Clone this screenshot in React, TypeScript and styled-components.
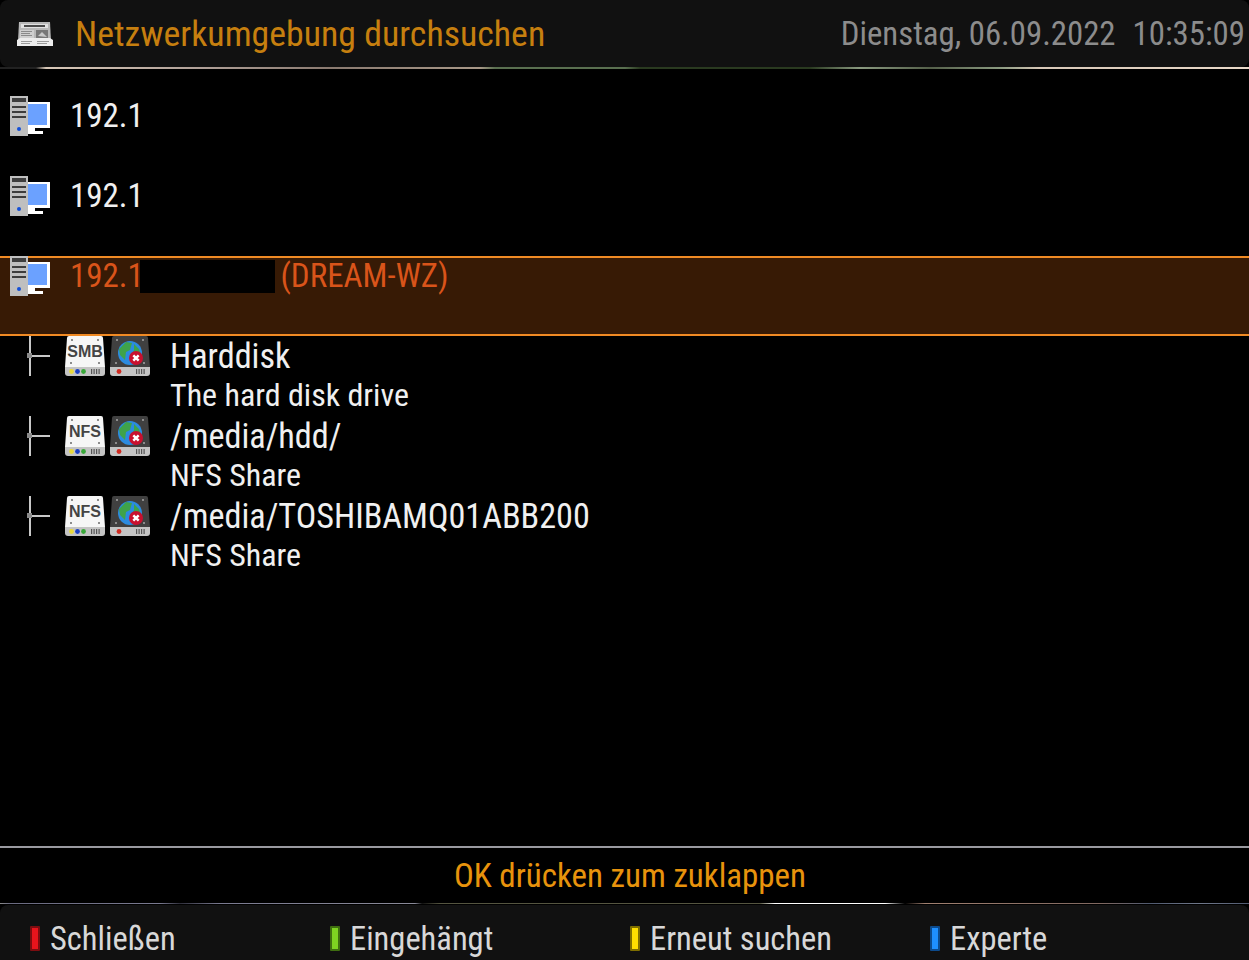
import React from 'react';
import styled, {createGlobalStyle} from 'styled-components';

const GlobalStyle = createGlobalStyle`
  html, body {
    margin: 0;
    padding: 0;
    height: 100%;
    background: #000;
    overflow: hidden;
  }
  #root {
    height: 960px;
  }
`

const NewspaperIcon = () => (
    <svg width="38" height="26" viewBox="0 0 38 26">
        <path d="M3 1h31l1 19H2z" fill="#b8b8b8"/>
        <path d="M5 3h27v4H5z" fill="#e2e2e2"/>
        <path d="M8 4h21v2H8z" fill="#4a4a4a"/>
        <path d="M4 9h14v8H4z" fill="#cfcfcf"/>
        <path d="M5 10h11v1H5zM5 12h9v1H5zM5 14h11v1H5z" fill="#8a8a8a"/>
        <path d="M20 9h12v8H20z" fill="#777"/>
        <path d="M22 15l4-4 5 5z" fill="#c8c8c8"/>
        <path d="M1 19l3-2h30l3 2v6H1z" fill="#ededed"/>
        <path d="M5 20h11v1H5zM5 22h9v1H5zM21 20h12v1H21zM21 22h10v1H21z" fill="#9a9a9a"/>
    </svg>
);

const ComputerIcon = () => (
    <svg width="40" height="40" viewBox="0 0 40 40">
        <path d="M18 6h22v26H18z" fill="#fff"/>
        <path d="M18 8h19v21H18z" fill="#6ba1ff"/>
        <path d="M18 32h7v3h8v3H18z" fill="#fff"/>
        <path d="M0 0h18v40H0z" fill="#bfbfbf"/>
        <path d="M2 2h14v4H2zM2 10h14v2H2zM2 15h14v2H2zM2 20h14v2H2z" fill="#3d3d3d"/>
        <circle cx="9" cy="33" r="2" fill="#1450d8"/>
    </svg>
);

const TreeIcon = () => (
    <svg width="40" height="40" viewBox="0 0 40 40">
        <path d="M9 0h2v40H9z" fill="#c8c8c8"/>
        <path d="M7 17h5v5H7z" fill="#8a8a8a"/>
        <path d="M12 19h18v2H12z" fill="#c8c8c8"/>
    </svg>
);

const ScrewDots = () => (
    <path d="M6 3h2v2H6zM32 3h2v2h-2zM5 26h2v2H5zM33 26h2v2h-2z" fill="#8c8c8c"/>
);

const ShareIcon = () => (
    <svg width="40" height="40" viewBox="0 0 40 40">
        <path d="M4 0h32a2 2 0 0 1 2 2l2 29H0L2 2a2 2 0 0 1 2-2z" fill="#f6f6f6"/>
        <ScrewDots/>
        <path d="M0 31h40v6a3 3 0 0 1-3 3H3a3 3 0 0 1-3-3z" fill="#c4c4c4"/>
        <circle cx="6.500" cy="35.500" r="2.400" fill="#e8d93a"/>
        <circle cx="12.500" cy="35.500" r="2.400" fill="#1a3fc4"/>
        <circle cx="18.500" cy="35.500" r="2.400" fill="#38a838"/>
        <path d="M26 33h1.200v5H26zM28.500 33h1.200v5h-1.200zM31 33h1.200v5H31zM33.500 33h1.200v5h-1.200z" fill="#555"/>
    </svg>
);

const NetworkDriveIcon = () => (
    <svg width="40" height="40" viewBox="0 0 40 40">
        <path d="M4 0h32a2 2 0 0 1 2 2l2 29H0L2 2a2 2 0 0 1 2-2z" fill="#404040"/>
        <ScrewDots/>
        <path d="M0 31h40v6a3 3 0 0 1-3 3H3a3 3 0 0 1-3-3z" fill="#c4c4c4"/>
        <circle cx="9" cy="35.500" r="2.400" fill="#d02a20"/>
        <path d="M26 33h1.200v5H26zM28.500 33h1.200v5h-1.200zM31 33h1.200v5H31zM33.500 33h1.200v5h-1.200z" fill="#555"/>
        <circle cx="20" cy="17" r="12" fill="#2b8be0"/>
        <path d="M9 13l7-7 6 1-2 7-4 2-1 8-5-5zM24 8l5 5 2 6-5 6-4-6 2-5z" fill="#3fa34a"/>
        <circle cx="26" cy="22" r="7" fill="#c8102e"/>
        <path d="M23.300 19.300l5.400 5.400M28.700 19.300l-5.400 5.400" stroke="#fff" strokeWidth="2.400"/>
    </svg>
);

const hosts = ['192.1', '192.1'];

const shares = [
    {tag: 'SMB', title: 'Harddisk', subtitle: 'The hard disk drive'},
    {tag: 'NFS', title: '/media/hdd/', subtitle: 'NFS Share'},
    {tag: 'NFS', title: '/media/TOSHIBAMQ01ABB200', subtitle: 'NFS Share'},
];

const buttons = [
    {label: 'Schließen', color: '#e8141c', edge: '#7c0d10'},
    {label: 'Eingehängt', color: '#7ed321', edge: '#3f6e10'},
    {label: 'Erneut suchen', color: '#ffdf00', edge: '#7e6e00'},
    {label: 'Experte', color: '#1e8fff', edge: '#0c4a8c'},
];

export default function App() {
    return (
        <Screen>
            <GlobalStyle/>
            <Header>
                <HeaderLeft>
                    <NewspaperIcon/>
                    <Title>Netzwerkumgebung durchsuchen</Title>
                </HeaderLeft>
                <Clock>
                    <span>Dienstag, 06.09.2022</span>
                    <span>10:35:09</span>
                </Clock>
            </Header>
            <TopRule/>
            <List>
                {hosts.map((host, index) => (
                    <HostRow key={index}>
                        <ComputerIcon/>
                        <HostText>{host}</HostText>
                    </HostRow>
                ))}
                <HostRow $selected>
                    <ComputerIcon/>
                    <HostText>
                        192.1<Redacted/> (DREAM-WZ)
                    </HostText>
                </HostRow>
                {shares.map((share, index) => (
                    <ShareRow key={index}>
                        <TreeIcon/>
                        <ShareIcon/>
                        <TagText>{share.tag}</TagText>
                        <NetworkDriveIcon/>
                        <ShareText>
                            <ShareTitle>{share.title}</ShareTitle>
                            <ShareSubtitle>{share.subtitle}</ShareSubtitle>
                        </ShareText>
                    </ShareRow>
                ))}
            </List>
            <Hint>OK drücken zum zuklappen</Hint>
            <BottomRule/>
            <Footer>
                {buttons.map((button) => (
                    <FooterButton key={button.label}>
                        <ColorKey $color={button.color} $edge={button.edge}/>
                        <FooterLabel>{button.label}</FooterLabel>
                    </FooterButton>
                ))}
            </Footer>
        </Screen>
    );
}

const Screen = styled.div`
  width: 1249px;
  height: 960px;
  display: flex;
  flex-direction: column;
  background: #000;
  font-family: Roboto, "Liberation Sans", sans-serif;
  font-stretch: condensed;
  overflow: hidden;
`

const Header = styled.header`
  height: 67px;
  flex-shrink: 0;
  display: flex;
  align-items: center;
  justify-content: space-between;
  padding: 0 4px 0 16px;
  box-sizing: border-box;
  background: #111;
  border-radius: 8px;
`

const TopRule = styled.div`
  height: 2px;
  flex-shrink: 0;
  background: linear-gradient(90deg,
    #222 0, #222 36px, #d8c8b8 46px, #b0a098 200px, #8a7a70 330px, #a89888 480px,
    #5a7050 495px, #5a7050 625px, #2a3a20 640px, #2a3a20 810px, #8a9a80 860px,
    #55604a 930px, #8a9a80 1000px, #d8c8b8 1040px, #e8d8c8 1249px);
`

const HeaderLeft = styled.div`
  display: flex;
  align-items: center;
  gap: 21px;
`

const Title = styled.h1`
  margin: 0;
  font-size: 35.800px;
  font-weight: 400;
  color: #c67f0f;
`

const Clock = styled.div`
  display: flex;
  gap: 17px;
  font-size: 32.800px;
  color: #8c8c8c;
`

const List = styled.main`
  flex: 1;
  margin-top: 27px;
  display: flex;
  flex-direction: column;
`

const HostRow = styled.div<{$selected?: boolean}>`
  height: 80px;
  box-sizing: border-box;
  display: flex;
  align-items: flex-start;
  gap: 20px;
  padding-left: 10px;
  color: ${(p) => (p.$selected ? '#d9541a' : '#f0f0f0')};
  background: ${(p) => (p.$selected ? '#371a05' : 'transparent')};
  box-shadow: ${(p) => (p.$selected ? 'inset 0 2px 0 #f08a24, inset 0 -2px 0 #f08a24' : 'none')};
`

const HostText = styled.div`
  font-size: 33px;
  line-height: 39px;
  white-space: pre;
`

const Redacted = styled.span`
  display: inline-block;
  width: 135px;
  height: 33px;
  margin-right: -2px;
  margin-left: -4px;
  background: #000;
  vertical-align: -6px;
`

const ShareRow = styled.div`
  position: relative;
  height: 80px;
  display: flex;
  align-items: flex-start;
  gap: 5px;
  padding-left: 20px;
  color: #f0f0f0;
`

const TagText = styled.span`
  position: absolute;
  left: 65px;
  top: 7px;
  width: 40px;
  text-align: center;
  font-family: "Liberation Sans", sans-serif;
  font-stretch: normal;
  font-size: 16px;
  font-weight: 700;
  color: #444;
`

const ShareText = styled.div`
  margin-left: 15px;
  margin-top: 1px;
  display: flex;
  flex-direction: column;
`

const ShareTitle = styled.div`
  font-size: 34.200px;
  line-height: 39px;
  white-space: pre;
`

const ShareSubtitle = styled.div`
  font-size: 32px;
  line-height: 39px;
  white-space: pre;
`

const Hint = styled.div`
  height: 57px;
  flex-shrink: 0;
  display: flex;
  align-items: center;
  justify-content: center;
  box-sizing: border-box;
  border-top: 2px solid #9a9aa0;
  font-size: 33px;
  color: #e8930c;
  padding: 0 0 1px 11px;
`

const BottomRule = styled.div`
  height: 1px;
  flex-shrink: 0;
  background: linear-gradient(90deg,
    #888 0, #6a6a80 10px, #7a7a90 160px, #30303c 180px, #7a7a90 220px, #8a8a98 415px,
    #111 422px, #555540 440px, #555540 760px, #fff 775px, #fff 885px, #000 905px,
    #a08070 925px, #806860 1100px, #505a70 1150px, #70788a 1200px, #505a70 1249px);
`

const Footer = styled.footer`
  height: 55px;
  flex-shrink: 0;
  display: grid;
  grid-template-columns: repeat(4, 300px);
  padding: 12px 0 0 30px;
  box-sizing: border-box;
  background: #111;
  border-radius: 8px 8px 0 0;
  margin-top: 1px;
`

const FooterButton = styled.div`
  display: flex;
  align-items: center;
  gap: 10px;
`

const ColorKey = styled.span<{$color: string; $edge: string}>`
  width: 6px;
  height: 21px;
  background: ${(p) => p.$color};
  border: 2px solid ${(p) => p.$edge};
  border-radius: 1px;
`

const FooterLabel = styled.span`
  font-size: 32.500px;
  color: #d8d8d8;
`
